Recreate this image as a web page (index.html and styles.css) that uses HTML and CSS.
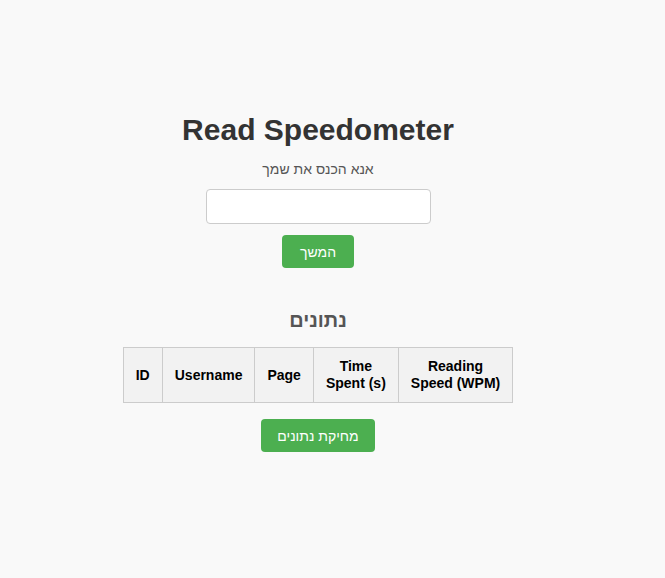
FILE: index.html
```html
<!DOCTYPE html>
<html lang="he">
<head>
<meta charset="utf-8">
<title>Read Speedometer</title>
<link rel="stylesheet" href="styles.css">
</head>
<body>
<div class="container">
  <h1 class="title">Read Speedometer</h1>
  <p class="label" dir="rtl">אנא הכנס את שמך</p>
  <input class="name-input" type="text">
  <div><button class="btn btn-continue" dir="rtl">המשך</button></div>
  <h2 class="section-title" dir="rtl">נתונים</h2>
  <table class="data-table">
    <thead>
      <tr>
        <th class="col-id">ID</th>
        <th class="col-user">Username</th>
        <th class="col-page">Page</th>
        <th class="col-time">Time<br>Spent (s)</th>
        <th class="col-speed">Reading<br>Speed (WPM)</th>
      </tr>
    </thead>
  </table>
  <div><button class="btn btn-clear" dir="rtl">מחיקת נתונים</button></div>
</div>
</body>
</html>
```

FILE: styles.css
```css
html, body {
  margin: 0;
  padding: 0;
  background: #f9f9f9;
}
body {
  font-family: "Liberation Sans", Arial, sans-serif;
  color: #333;
}
.container {
  width: 636px;
  padding-top: 111px;
  text-align: center;
}
.title {
  margin: 0;
  font-size: 30px;
  font-weight: bold;
  color: #333;
  line-height: 37px;
}
.label {
  margin: 12px 0 0;
  font-size: 14px;
  line-height: 18px;
  color: #555;
}
.name-input {
  display: block;
  margin: 11px auto 0;
  box-sizing: border-box;
  width: 225px;
  height: 35px;
  border: 1px solid #ccc;
  border-radius: 4px;
  background: #fff;
}
.btn {
  font-family: "Liberation Sans", Arial, sans-serif;
  font-size: 14px;
  color: #fff;
  background: #4caf50;
  border: none;
  border-radius: 4px;
  height: 33px;
  padding: 0;
  white-space: nowrap;
  cursor: pointer;
}
.btn-continue {
  margin-top: 11px;
  width: 72px;
}
.section-title {
  margin: 40px 0 0;
  font-size: 20px;
  line-height: 24px;
  color: #555;
}
.data-table {
  margin: 15px auto 0;
  border-collapse: collapse;
}
.data-table th {
  background: #f2f2f2;
  border: 1px solid #ccc;
  padding: 10px 12px;
  font-size: 14px;
  line-height: 17px;
  color: #000;
}
.col-id {
  padding-left: 11px;
  padding-right: 11px;
}
.btn-clear {
  margin-top: 16px;
  width: 114px;
}
```
